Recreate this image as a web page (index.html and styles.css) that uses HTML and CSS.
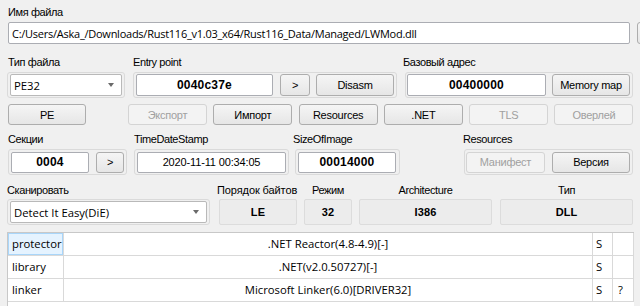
FILE: index.html
```html
<!DOCTYPE html>
<html lang="ru">
<head>
<meta charset="utf-8">
<title>DiE</title>
<link rel="stylesheet" href="styles.css">
</head>
<body>
<div class="app">
  <div class="lbl top-lbl">Имя файла</div>
  <div class="row r-file">
    <div class="edit path">C:/Users/Aska_/Downloads/Rust116_v1.03_x64/Rust116_Data/Managed/LWMod.dll</div>
    <div class="btn browse"></div>
  </div>

  <div class="row r2">
    <div class="col c-ftype">
      <div class="lbl">Тип файла</div>
      <div class="grp">
        <div class="combo w-ftype"><span>PE32</span><span class="arrow"></span></div>
      </div>
    </div>
    <div class="col c-entry">
      <div class="lbl">Entry point</div>
      <div class="grp">
        <div class="edit val w-entry">0040c37e</div>
        <div class="btn w-go">&gt;</div>
        <div class="btn w-disasm">Disasm</div>
      </div>
    </div>
    <div class="col c-base">
      <div class="lbl">Базовый адрес</div>
      <div class="grp grp-base">
        <div class="edit val w-base">00400000</div>
        <div class="btn w-mmap">Memory map</div>
      </div>
    </div>
  </div>

  <div class="row r3">
    <div class="btn w-pe">PE</div>
    <div class="tabs">
      <div class="btn dis">Экспорт</div>
      <div class="btn">Импорт</div>
      <div class="btn">Resources</div>
      <div class="btn">.NET</div>
      <div class="btn dis">TLS</div>
      <div class="btn dis">Оверлей</div>
    </div>
  </div>

  <div class="row r4">
    <div class="col c-sec">
      <div class="lbl">Секции</div>
      <div class="grp">
        <div class="edit val w-sec">0004</div>
        <div class="btn w-go2">&gt;</div>
      </div>
    </div>
    <div class="col c-tds">
      <div class="lbl">TimeDateStamp</div>
      <div class="grp">
        <div class="edit w-tds">2020-11-11 00:34:05</div>
      </div>
    </div>
    <div class="col c-size">
      <div class="lbl">SizeOfImage</div>
      <div class="grp">
        <div class="edit val w-size">00014000</div>
      </div>
    </div>
    <div class="col c-res">
      <div class="lbl">Resources</div>
      <div class="grp grp-res">
        <div class="btn dis w-man">Манифест</div>
        <div class="btn w-ver">Версия</div>
      </div>
    </div>
  </div>

  <div class="row r5">
    <div class="col c-scan">
      <div class="lbl lbl5">Сканировать</div>
      <div class="grp">
        <div class="combo w-scan"><span>Detect It Easy(DiE)</span><span class="arrow"></span></div>
      </div>
    </div>
    <div class="col c-byte">
      <div class="lbl lbl5 clip">Порядок байтов</div>
      <div class="ro">LE</div>
    </div>
    <div class="col c-mode">
      <div class="lbl lbl5 ctr">Режим</div>
      <div class="ro">32</div>
    </div>
    <div class="col c-arch">
      <div class="lbl lbl5 ctr">Architecture</div>
      <div class="ro">I386</div>
    </div>
    <div class="col c-type">
      <div class="lbl lbl5 ctr">Тип</div>
      <div class="ro">DLL</div>
    </div>
  </div>

  <div class="table">
    <div class="cell c1 cur">protector</div>
    <div class="cell c2">.NET Reactor(4.8-4.9)[-]</div>
    <div class="cell c3">S</div>
    <div class="cell c4"></div>

    <div class="cell c1">library</div>
    <div class="cell c2">.NET(v2.0.50727)[-]</div>
    <div class="cell c3">S</div>
    <div class="cell c4"></div>

    <div class="cell c1">linker</div>
    <div class="cell c2">Microsoft Linker(6.0)[DRIVER32]</div>
    <div class="cell c3">S</div>
    <div class="cell c4">?</div>
  </div>
</div>
</body>
</html>
```

FILE: styles.css
```css
* { box-sizing: border-box; }
html, body { margin: 0; padding: 0; }
body {
  width: 640px;
  height: 306px;
  overflow: hidden;
  background: #f0f0f0;
  font-family: "Liberation Sans", Arial, sans-serif;
  font-size: 11px;
  color: #000;
}
.app { display: flex; flex-direction: column; width: 640px; overflow: hidden; }
.row { display: flex; flex-shrink: 0; }
.col { display: flex; flex-direction: column; flex-shrink: 0; }

.lbl {
  height: 20px;
  line-height: 20px;
  white-space: nowrap;
  letter-spacing: -0.4px;
}
.top-lbl { padding-left: 8px; margin-top: 2px; }
.lbl5 { height: 18px; line-height: 18px; }
.ctr { text-align: center; }
.clip { overflow: hidden; width: 81px; margin-left: -2px; letter-spacing: -0.1px; }

.grp {
  height: 26px;
  border: 1px solid #dadada;
  border-radius: 3px;
  display: flex;
  align-items: center;
  padding: 0 2px;
}

.edit {
  height: 22px;
  background: #fff;
  border: 1px solid #abadb3;
  border-radius: 2px;
  display: flex;
  align-items: center;
  justify-content: center;
  white-space: nowrap;
  overflow: hidden;
  flex-shrink: 0;
  letter-spacing: -0.15px;
}
.val { font-weight: bold; font-size: 12px; letter-spacing: 0.2px; }

.btn {
  height: 22px;
  border: 1px solid #adadad;
  border-radius: 3px;
  background: linear-gradient(#f5f5f5, #e6e6e6);
  display: flex;
  align-items: center;
  justify-content: center;
  white-space: nowrap;
  flex-shrink: 0;
  letter-spacing: -0.25px;
}
.btn.dis {
  color: #a0a0a0;
  border-color: #d4d4d4;
  background: #f3f3f3;
}

.combo {
  height: 22px;
  background: #fff;
  border: 1px solid #b9b9b9;
  border-radius: 2px;
  display: flex;
  align-items: center;
  padding-left: 3px;
  flex-shrink: 0;
  font-family: "Open Sans", "Noto Sans", sans-serif;
  font-size: 11.3px;
}
.arrow {
  margin-left: auto;
  margin-right: 7px;
  width: 0;
  height: 0;
  border-left: 3.5px solid transparent;
  border-right: 3.5px solid transparent;
  border-top: 4px solid #6a6a6a;
}

.ro {
  height: 26px;
  background: #ececec;
  border: 1px solid #dcdcdc;
  border-radius: 2px;
  display: flex;
  align-items: center;
  justify-content: center;
  font-weight: bold;
  letter-spacing: 0.1px;
}

/* file row */
.r-file { height: 22px; padding-left: 8px; }
.path {
  width: 622px;
  justify-content: flex-start;
  padding-left: 3px;
  font-family: "Open Sans", "Noto Sans", sans-serif;
  font-size: 11px;
  letter-spacing: -0.25px;
}
.browse { width: 40px; margin-left: 7px; }

/* row 2 */
.r2 { margin-top: 8px; padding-left: 7px; }
.c-ftype { width: 118px; }
.c-ftype .lbl { padding-left: 1px; }
.w-ftype { width: 112px; }
.c-entry { width: 264px; margin-left: 8px; }
.w-entry { width: 137px; }
.w-go { width: 30px; margin-left: 7px; }
.w-disasm { width: 78px; margin-left: 6px; }
.c-base { width: 228px; margin-left: 8px; }
.c-base .lbl { margin-left: -2px; }
.grp-base { padding-left: 1px; }
.w-base { width: 139px; }
.w-mmap { width: 78px; margin-left: 6px; }

/* row 3 */
.r3 { margin-top: 6px; padding-left: 8px; height: 21px; }
.r3 .btn { height: 21px; }
.w-pe { width: 78px; }
.tabs { display: flex; gap: 6.3px; margin-left: 42px; }
.tabs .btn { width: 79px; }

/* row 4 */
.r4 { margin-top: 4px; padding-left: 8px; }
.c-sec { width: 119px; }
.w-sec { width: 78px; height: 21px; }
.w-go2 { width: 28px; height: 21px; margin-left: 7px; }
.c-tds { width: 155px; margin-left: 7px; }
.w-tds { width: 149px; height: 21px; }
.c-size { width: 105px; margin-left: 6px; }
.c-size .lbl { margin-left: -2px; }
.w-size { width: 98px; height: 21px; }
.c-res { width: 169px; margin-left: 64px; }
.c-res .lbl { margin-left: -1px; }
.grp-res { padding-left: 1px; }
.w-man { width: 79px; height: 21px; }
.w-ver { width: 78px; height: 21px; margin-left: 7px; }

/* row 5 */
.r5 { margin-top: 6px; padding-left: 7px; }
.c-scan { width: 203px; }
.w-scan { width: 197px; }
.c-byte { width: 78px; margin-left: 9px; }
.c-mode { width: 48px; margin-left: 7px; }
.c-arch { width: 133px; margin-left: 7px; }
.c-type { width: 133px; margin-left: 8px; }

/* table */
.table {
  margin-top: 7px;
  margin-left: 7px;
  width: 627px;
  height: 74px;
  background: #fff;
  border-top: 1px solid #c8c8c8;
  border-left: 1px solid #c8c8c8;
  display: grid;
  grid-template-columns: 56px 529px 20px 21px;
  grid-auto-rows: 23px;
  align-content: start;
  font-family: "Open Sans", "Noto Sans", sans-serif;
  font-size: 11.3px;
}
.cell {
  border-right: 1px solid #d9d9d9;
  border-bottom: 1px solid #d9d9d9;
  line-height: 22px;
  white-space: nowrap;
  overflow: hidden;
}
.c1 { padding-left: 4px; }
.c2 { text-align: center; }
.c3 { padding-left: 3px; }
.c4 { padding-left: 5px; }
.cur { background: #e5f3ff; box-shadow: inset 0 0 0 1px #a9d6fa; }
```
